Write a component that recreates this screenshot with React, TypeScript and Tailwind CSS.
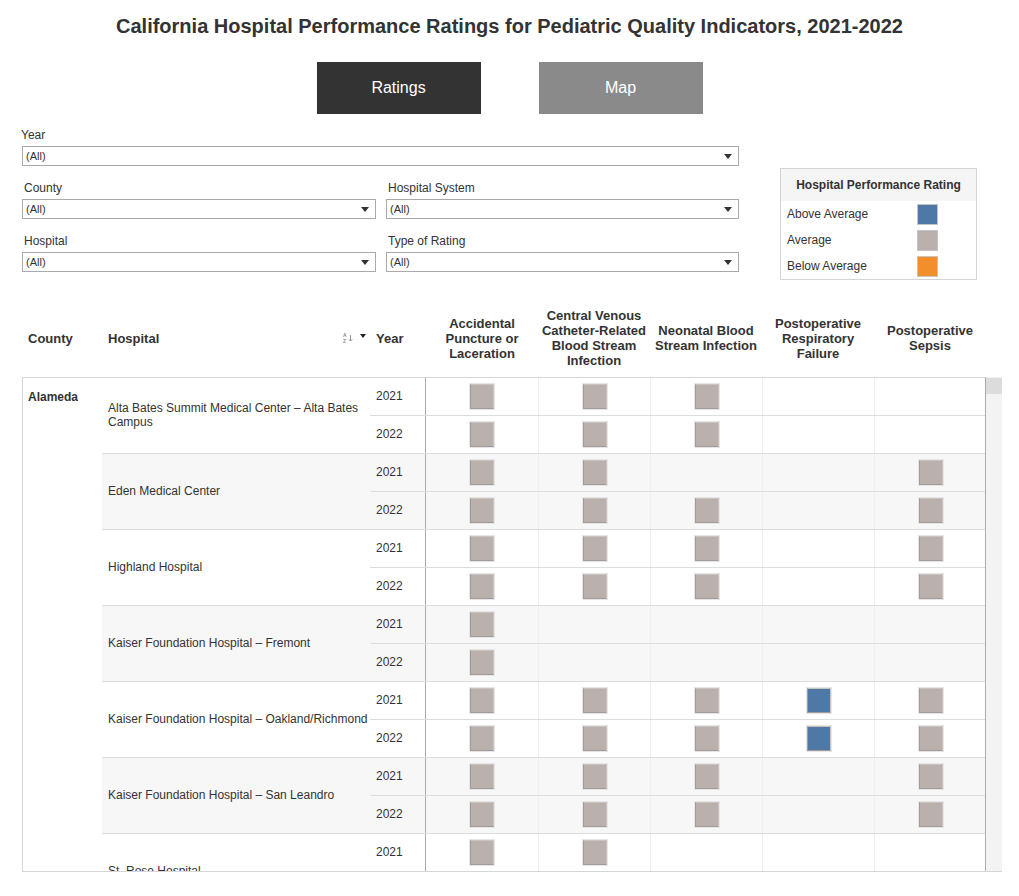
import { Fragment } from 'react';

type Rating = 0 | 1 | 2 | 3; // 0 none, 1 above, 2 average, 3 below

type HospitalRow = {
    name: string;
    years: { year: string; ratings: Rating[] }[];
};

const measures = [
    ['Accidental', 'Puncture or', 'Laceration'],
    ['Central Venous', 'Catheter-Related', 'Blood Stream', 'Infection'],
    ['Neonatal Blood', 'Stream Infection'],
    ['Postoperative', 'Respiratory', 'Failure'],
    ['Postoperative', 'Sepsis'],
];

const hospitals: HospitalRow[] = [
    {
        name: 'Alta Bates Summit Medical Center – Alta Bates Campus',
        years: [
            { year: '2021', ratings: [2, 2, 2, 0, 0] },
            { year: '2022', ratings: [2, 2, 2, 0, 0] },
        ],
    },
    {
        name: 'Eden Medical Center',
        years: [
            { year: '2021', ratings: [2, 2, 0, 0, 2] },
            { year: '2022', ratings: [2, 2, 2, 0, 2] },
        ],
    },
    {
        name: 'Highland Hospital',
        years: [
            { year: '2021', ratings: [2, 2, 2, 0, 2] },
            { year: '2022', ratings: [2, 2, 2, 0, 2] },
        ],
    },
    {
        name: 'Kaiser Foundation Hospital – Fremont',
        years: [
            { year: '2021', ratings: [2, 0, 0, 0, 0] },
            { year: '2022', ratings: [2, 0, 0, 0, 0] },
        ],
    },
    {
        name: 'Kaiser Foundation Hospital – Oakland/Richmond',
        years: [
            { year: '2021', ratings: [2, 2, 2, 1, 2] },
            { year: '2022', ratings: [2, 2, 2, 1, 2] },
        ],
    },
    {
        name: 'Kaiser Foundation Hospital – San Leandro',
        years: [
            { year: '2021', ratings: [2, 2, 2, 0, 2] },
            { year: '2022', ratings: [2, 2, 2, 0, 2] },
        ],
    },
    {
        name: 'St. Rose Hospital',
        years: [
            { year: '2021', ratings: [2, 2, 0, 0, 0] },
            { year: '2022', ratings: [2, 2, 0, 0, 0] },
        ],
    },
];

function Caret() {
    return (
        <svg width="8" height="5" viewBox="0 0 8 5">
            <path d="M0 0 L8 0 L4 5 Z" fill="#333" />
        </svg>
    );
}

function Dropdown({ label, width, labelPad }: { label: string; width: string; labelPad: string }) {
    return (
        <div className={width}>
            <div className={`mb-[4px] text-[12px] leading-[14px] text-[#333] ${labelPad}`}>{label}</div>
            <div className="flex h-[20px] items-center justify-between border border-[#aaaaaa] bg-white pr-[6px] pl-[3px] text-[11px] text-[#333]">
                <span>(All)</span>
                <Caret />
            </div>
        </div>
    );
}

function Square({ rating }: { rating: Rating }) {
    if (rating === 0) return null;
    const bg = rating === 1 ? 'bg-[#4e79a7]' : rating === 3 ? 'bg-[#f28e2b]' : 'bg-[#bab0ac]';
    return (
        <div
            className={`h-[25px] w-[24px] border border-[#a39b98] border-t-[#c9c3c1] border-r-[#c9c3c1] ${bg} shadow-[0_0_0_1px_#e6e6e6]`}
        />
    );
}

export default function App() {
    return (
        <div className="h-[896px] w-[1019px] overflow-hidden bg-white font-['Liberation_Sans',Arial,sans-serif] text-[#333]">
            <h1 className="mt-[14px] h-[24px] text-center text-[20px] leading-[24px] font-bold text-[#333]">
                California Hospital Performance Ratings for Pediatric Quality Indicators, 2021-2022
            </h1>

            <div className="mt-[24px] flex justify-center gap-[58px]">
                <div className="flex h-[52px] w-[164px] items-center justify-center bg-[#333333] text-[16px] text-white">
                    Ratings
                </div>
                <div className="flex h-[52px] w-[164px] items-center justify-center bg-[#8a8a8a] text-[16px] text-white">
                    Map
                </div>
            </div>

            {/* filters + legend */}
            <div className="mt-[14px] flex items-start pl-[22px]">
                <div className="flex w-[717px] flex-col gap-[15px]">
                    <Dropdown label="Year" width="w-[717px]" labelPad="-ml-[1px]" />
                    <div className="flex gap-[10px]">
                        <Dropdown label="County" width="w-[354px]" labelPad="pl-[2px]" />
                        <Dropdown label="Hospital System" width="w-[353px]" labelPad="pl-[2px]" />
                    </div>
                    <div className="flex gap-[10px]">
                        <Dropdown label="Hospital" width="w-[354px]" labelPad="pl-[2px]" />
                        <Dropdown label="Type of Rating" width="w-[353px]" labelPad="pl-[2px]" />
                    </div>
                </div>
                <div className="mt-[40px] ml-[41px] h-[112px] w-[197px] border border-[#d4d4d4]">
                    <div className="flex h-[32px] items-center justify-center bg-[#f5f5f5] text-[12px] font-bold">
                        Hospital Performance Rating
                    </div>
                    {[
                        ['Above Average', 'bg-[#4e79a7]'],
                        ['Average', 'bg-[#bab0ac]'],
                        ['Below Average', 'bg-[#f28e2b]'],
                    ].map(([label, color]) => (
                        <div key={label} className="flex h-[26px] items-center">
                            <span className="w-[136px] pl-[6px] text-[12px]">{label}</span>
                            <span className={`h-[21px] w-[21px] border border-[#c4c4c4] ${color}`} />
                        </div>
                    ))}
                </div>
            </div>

            {/* table header */}
            <div className="mt-[20px] ml-[22px] flex h-[77px] items-center pb-[1px] text-[13px] leading-[15px] font-bold">
                <div className="w-[80px] pl-[6px]">County</div>
                <div className="flex w-[268px] items-center pl-[6px]">
                    <span className="flex-1">Hospital</span>
                    <svg width="12" height="12" viewBox="0 0 12 12" className="mr-[6px]">
                        <text x="1" y="5" fontSize="5" fill="#888" fontFamily="Liberation Sans">A</text>
                        <text x="1" y="11" fontSize="5" fill="#888" fontFamily="Liberation Sans">Z</text>
                        <path d="M8.5 3 V9 M6.8 7.3 L8.5 9 L10.2 7.3" stroke="#888" strokeWidth="0.9" fill="none" />
                    </svg>
                    <svg width="6" height="4" viewBox="0 0 6 4" className="mr-[4px] -mt-[4px]">
                        <path d="M0 0 L6 0 L3 4 Z" fill="#222" />
                    </svg>
                </div>
                <div className="w-[56px] pl-[6px]">Year</div>
                {measures.map((lines, i) => (
                    <div key={i} className="w-[112px] text-center">
                        {lines.map((l, j) => (
                            <Fragment key={j}>
                                {l}
                                {j < lines.length - 1 && <br />}
                            </Fragment>
                        ))}
                    </div>
                ))}
            </div>

            {/* table body */}
            <div className="ml-[22px] flex h-[495px] w-[980px] border-b border-[#d6d6d6]">
                <div className="flex h-full w-[964px] overflow-hidden border-t border-r border-l border-t-[#d6d6d6] border-r-[#aaaaaa] border-l-[#d6d6d6]">
                    <div className="w-[79px] shrink-0 bg-white pt-[10px] pl-[5px] text-[12px] font-bold">Alameda</div>
                    <div className="flex w-[884px] shrink-0 flex-col">
                        {hospitals.map((h, hi) => (
                            <div key={h.name} className={`flex shrink-0 ${hi % 2 === 1 ? 'bg-[#f7f7f7]' : 'bg-white'}`}>
                                <div className="flex w-[268px] items-center border-b border-[#dddddd] pr-[2px] pb-[1px] pl-[6px] text-[12px] leading-[14px]">
                                    {h.name}
                                </div>
                                <div className="flex w-[616px] flex-col">
                                    {h.years.map((y) => (
                                        <div key={y.year} className="flex h-[38px] border-b border-[#dddddd]">
                                            <div className="flex w-[56px] items-center pb-[1px] pl-[6px] text-[12px]">{y.year}</div>
                                            <div className="flex border-l border-[#aaaaaa]">
                                                {y.ratings.map((r, ci) => (
                                                    <div
                                                        key={ci}
                                                        className={`flex w-[112px] items-center justify-center ${ci > 0 ? 'border-l border-[#efefef]' : ''}`}
                                                    >
                                                        <Square rating={r} />
                                                    </div>
                                                ))}
                                            </div>
                                        </div>
                                    ))}
                                </div>
                            </div>
                        ))}
                    </div>
                </div>
                <div className="flex w-[16px] flex-col bg-[#f3f3f3] pt-[1px]">
                    <div className="h-[16px] w-full bg-[#dcdcdc]" />
                </div>
            </div>
        </div>
    );
}
